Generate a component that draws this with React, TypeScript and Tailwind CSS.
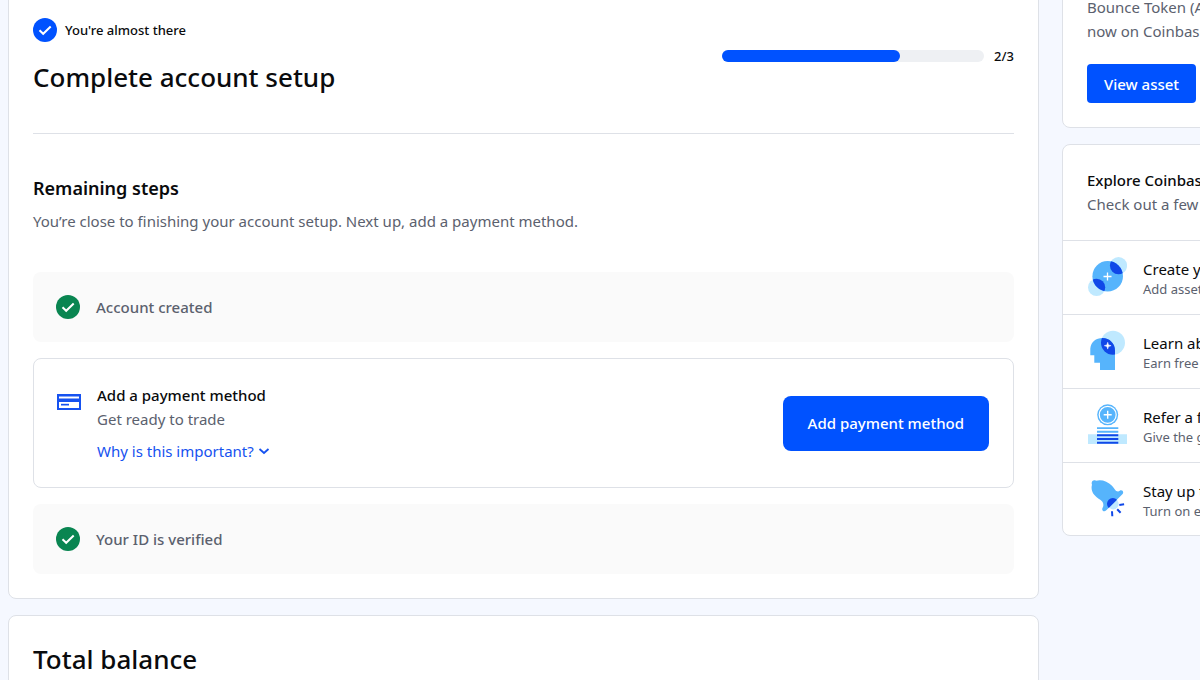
import type { ReactNode } from "react";

function CheckCircle({ className }: { className: string }) {
  return (
    <svg viewBox="0 0 24 24" className={`h-6 w-6 shrink-0 ${className}`} aria-hidden="true">
      <circle cx="12" cy="12" r="12" fill="currentColor" />
      <path d="M6.500 12.200l3.700 3.600 7.500-7.300" fill="none" stroke="#fff" strokeWidth="2" />
    </svg>
  );
}

function CardIcon() {
  return (
    <svg viewBox="0 0 24 24" className="h-6 w-6 shrink-0" aria-hidden="true">
      <path
        fill="#1652f0"
        fillRule="evenodd"
        d="M0 4h24v16H0zM2 6.500v2h20v-2zM2 12v6h20v-6z"
      />
      <path fill="#1652f0" d="M4 13.800h8v1.700H4z" />
    </svg>
  );
}

function CreateIcon() {
  return (
    <svg viewBox="0 0 40 40" className="h-10 w-10 shrink-0" aria-hidden="true">
      <clipPath id="disc">
        <circle cx="20.700" cy="20.300" r="15.300" />
      </clipPath>
      <circle cx="31.500" cy="9.600" r="8.600" fill="#bfe9ff" />
      <circle cx="9.600" cy="31.300" r="8.600" fill="#bfe9ff" />
      <circle cx="20.700" cy="20.300" r="15.300" fill="#56b4fc" />
      <g clipPath="url(#disc)" fill="#1048e8">
        <circle cx="31.500" cy="9.600" r="8.600" />
        <circle cx="9.600" cy="31.300" r="8.600" />
      </g>
      <path d="M20.500 16.500v8M16.500 20.500h8" stroke="#fff" strokeWidth="1.300" />
    </svg>
  );
}

function LearnIcon() {
  const head =
    "M28 40H13v-7.300H7.300V25.300H3.300V18.500C4 12 9 8 15.500 8 22.500 8 28 13.500 28 20.500z";

  return (
    <svg viewBox="0 0 40 40" className="h-10 w-10 shrink-0" aria-hidden="true">
      <clipPath id="head">
        <path d={head} />
      </clipPath>
      <circle cx="26" cy="12.700" r="12" fill="#bfe9ff" />
      <path d={head} fill="#56b4fc" />
      <circle cx="26" cy="12.700" r="12" fill="#1048e8" clipPath="url(#head)" />
      <path
        d="M20.700 12.300l.8 2.600 2.600.8-2.600.8-.8 2.600-.8-2.600-2.600-.8 2.600-.8z"
        fill="#fff"
        stroke="#fff"
        strokeWidth=".5"
      />
    </svg>
  );
}

function ReferIcon() {
  return (
    <svg viewBox="0 0 40 40" className="h-10 w-10 shrink-0" aria-hidden="true">
      <circle cx="20.700" cy="10.800" r="10.500" fill="#56b4fc" />
      <circle cx="20.700" cy="10.800" r="8.500" fill="none" stroke="#fff" strokeWidth="1.200" />
      <path d="M20.700 6.800v8M16.700 10.800h8" stroke="#fff" strokeWidth="1.400" />
      <path d="M10 23.200h21.300V25H10zM10 26.800h21.300v1.900H10z" fill="#56b4fc" />
      <path d="M1 30.200h39.200V40H1z" fill="#bfe9ff" />
      <path d="M10 30.200h21.300v2H10zM10 34h21.300v2H10zM10 37.800h21.300v2H10z" fill="#1048e8" />
    </svg>
  );
}

function BellIcon() {
  return (
    <svg viewBox="0 0 40 40" className="h-10 w-10 shrink-0" aria-hidden="true">
      <circle cx="26.300" cy="26" r="5.400" fill="#bfe9ff" />
      <path
        d="M5 6.800C3.700 3.800 6.300 1.300 9 2.800C14 1.200 20.500 3 25 7.800C28 11 28.300 13.200 31 13.600C31.800 13.600 32.200 13.200 32.700 12.800C34.900 11.200 37.300 13.800 35.600 16L19 32.600C16.900 34.400 14.200 32.200 15.600 29.800C16.800 27.500 16.600 25.500 15.200 23.600C13.500 21.500 10 20.300 7.200 16.800C4.700 13.600 4 10 5 6.800Z"
        fill="#56b4fc"
      />
      <path d="M21.700 30a5.800 5.800 0 0 1 8.300-8.300z" fill="#1048e8" />
      <path
        d="M32.300 26.900l4.800-.6M30.200 31.200l3.400 3.600M25 33.200l.3 5"
        stroke="#1048e8"
        strokeWidth="2"
      />
    </svg>
  );
}

const EXPLORE: { title: string; text: string; icon: ReactNode }[] = [
  { title: "Create your portfolio", text: "Add assets to your watchlist", icon: <CreateIcon /> },
  { title: "Learn about crypto", text: "Earn free crypto", icon: <LearnIcon /> },
  { title: "Refer a friend", text: "Give the gift of crypto", icon: <ReferIcon /> },
  { title: "Stay up to date", text: "Turn on email updates", icon: <BellIcon /> },
];

function DoneStep({ label }: { label: string }) {
  return (
    <li className="flex items-center gap-4 rounded-lg bg-[#fafafa] p-[23px]">
      <CheckCircle className="text-[#098551]" />
      <span className="font-medium text-[#5b616e]">{label}</span>
    </li>
  );
}

export default function App() {
  return (
    <div className="flex h-screen gap-[23px] overflow-hidden bg-[#f5f8ff] pl-2 font-['Noto_Sans',sans-serif] text-[15px] leading-6 text-[#0a0b0d]">
      <main className="-mt-2 min-w-0 flex-1">

        {/* Account setup */}
        <section className="rounded-lg border border-[#dee1e7] bg-white px-6 pt-[25px] pb-6">
          <div className="flex items-start justify-between border-b border-[#dee1e7] pb-[38px]">
            <div>
              <p className="flex items-center gap-2 text-[13px] font-medium">
                <CheckCircle className="text-[#0052ff]" />
                You're almost there
              </p>
              <h1 className="mt-[17px] text-[26px] leading-9 font-medium">Complete account setup</h1>
            </div>
            <div className="mt-8 flex items-center gap-[10px]">
              <div
                className="h-3 w-[262px] rounded-full bg-[#eef0f3]"
                role="progressbar"
                aria-label="Account setup"
                aria-valuemin={0}
                aria-valuemax={3}
                aria-valuenow={2}
              >
                <div className="h-3 w-[68%] rounded-full bg-[#0052ff]" />
              </div>
              <span className="text-[13px] leading-3 font-medium">2/3</span>
            </div>
          </div>

          <h2 className="pt-10 text-[18px] leading-7 font-semibold">Remaining steps</h2>
          <p className="mt-[7px] text-[#5b616e]">
            You’re close to finishing your account setup. Next up, add a payment method.
          </p>

          <ul className="mt-[39px] flex flex-col gap-4">
            <DoneStep label="Account created" />
            <li className="flex items-center justify-between rounded-lg border border-[#dee1e7] py-6 pr-6 pl-[23px]">
              <div className="flex items-start gap-4">
                <div className="pt-[7px]">
                  <CardIcon />
                </div>
                <div>
                  <h3 className="font-medium">Add a payment method</h3>
                  <p className="text-[#5b616e]">Get ready to trade</p>
                  <button className="mt-2 flex items-center gap-1 text-[#1652f0]">
                    Why is this important?
                    <svg viewBox="0 0 12 12" className="h-3 w-3" aria-hidden="true">
                      <path d="M1.500 4L6 8 10.500 4" fill="none" stroke="currentColor" strokeWidth="1.800" />
                    </svg>
                  </button>
                </div>
              </div>
              <button className="h-[55px] rounded-lg bg-[#0052ff] px-[25px] font-medium text-white">
                Add payment method
              </button>
            </li>
            <DoneStep label="Your ID is verified" />
          </ul>
        </section>

        {/* Balance */}
        <section className="mt-4 rounded-lg border border-[#dee1e7] bg-white px-6 pt-[25px] pb-20">
          <h2 className="text-[26px] leading-9 font-medium">Total balance</h2>
        </section>
      </main>

      <aside className="-mt-8 w-[138px] shrink-0 overflow-hidden whitespace-nowrap">

        {/* New asset */}
        <section className="w-[344px] rounded-lg border border-[#dee1e7] bg-white px-6 pt-[26px] pb-6">
          <p className="text-[#5b616e]">
            Bounce Token (AUCTION) is
            <br />
            now on Coinbase
          </p>
          <button className="mt-[21px] h-[39px] rounded bg-[#0052ff] px-[17px] font-medium text-white">
            View asset
          </button>
        </section>

        {/* Explore list */}
        <section className="mt-4 w-[344px] rounded-lg border border-[#dee1e7] bg-white">
          <div className="px-6 pt-[23px] pb-6">
            <h2 className="font-medium">Explore Coinbase</h2>
            <p className="text-[#5b616e]">Check out a few things to do</p>
          </div>
          <ul>
            {EXPLORE.map((item) => (
              <li
                key={item.title}
                className="flex items-start gap-4 border-t border-[#dee1e7] px-6 pt-[15px] pb-[15px] last:pb-[14px]"
              >
                {item.icon}
                <div className="pt-[3px] leading-5">
                  <h3>{item.title}</h3>
                  <p className="text-[13px] text-[#5b616e]">{item.text}</p>
                </div>
              </li>
            ))}
          </ul>
        </section>
      </aside>
    </div>
  );
}
